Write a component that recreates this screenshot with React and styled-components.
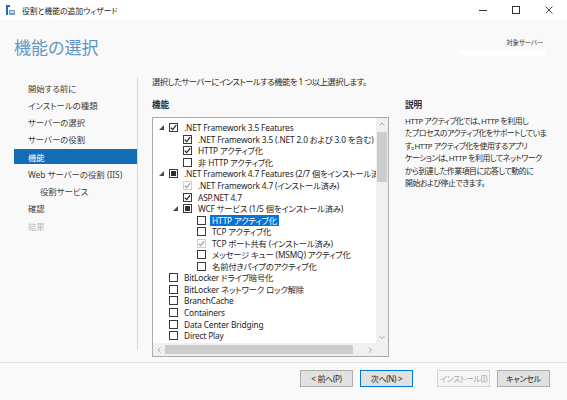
import React from 'react';
import styled, { createGlobalStyle } from 'styled-components';

const GlobalStyle = createGlobalStyle`
  html, body {
    margin: 0;
    padding: 0;
    background: #f9f9f9;
  }
  body {
    font-family: "Noto Sans", "Noto Sans CJK JP", sans-serif;
    font-feature-settings: "palt";
    color: #1e1e1e;
  }
`;

const Window = styled.div`
  width: 567px;
  height: 400px;
  display: flex;
  flex-direction: column;
  background: #f9f9f9;
  overflow: hidden;
`;

const TitleBar = styled.div`
  height: 20px;
  flex: none;
  background: #fff;
  display: flex;
  align-items: center;
  padding-left: 6px;
`;

const TitleText = styled.span`
  font-size: 7.8px;
  margin-left: 7px;
  color: #222;
`;

const Controls = styled.div`
  margin-left: auto;
  margin-right: 2px;
  display: flex;
`;

const ControlButton = styled.div`
  width: 33px;
  height: 20px;
  display: flex;
  align-items: center;
  justify-content: center;
`;

const Header = styled.div`
  height: 50px;
  flex: none;
  display: flex;
  justify-content: space-between;
  padding: 0 22px 0 14px;
`;

const PageTitle = styled.h1`
  margin: 17px 0 0;
  font-size: 17px;
  line-height: 22px;
  font-weight: 400;
  color: #5f95c4;
`;

const Target = styled.div`
  margin-top: 18px;
  display: flex;
  flex-direction: column;
  align-items: flex-end;
`;

const TargetLabel = styled.span`
  font-size: 6.5px;
  line-height: 10px;
  letter-spacing: -0.2px;
  margin-right: 2px;
  color: #333;
`;

const TargetValue = styled.span`
  width: 85px;
  height: 5px;
  margin-top: 2px;
  background: #fff;
`;

const Body = styled.div`
  flex: 1;
  display: flex;
  min-height: 0;
`;

const Nav = styled.nav`
  width: 138px;
  flex: none;
  box-sizing: border-box;
  margin: 7px 0 12px;
  padding-top: 3px;
  border-right: 1px solid #d9d9d9;
  display: flex;
  flex-direction: column;
  gap: 2.25px;
`;

const NavItem = styled.div`
  height: 15px;
  margin-left: 14px;
  padding-left: ${p => (p.$indent ? 26 : 14)}px;
  display: flex;
  align-items: center;
  font-size: 8.4px;
  color: ${p => (p.$active ? '#fff' : p.$disabled ? '#b9b9b9' : '#3c3c3c')};
  background: ${p => (p.$active ? '#136cb6' : 'transparent')};
  white-space: nowrap;
`;

const Content = styled.div`
  flex: 1;
  padding: 6px 0 0 14px;
  display: flex;
  flex-direction: column;
`;

const Intro = styled.div`
  font-size: 8.3px;
  line-height: 12px;
  letter-spacing: -0.5px;
  color: #2a2a2a;
  white-space: nowrap;
`;

const Columns = styled.div`
  margin-top: 11px;
  display: flex;
  gap: 16px;
`;

const Column = styled.div`
  width: ${p => p.$width}px;
  display: flex;
  flex-direction: column;
`;

const Heading = styled.div`
  font-size: 8.6px;
  line-height: 12px;
  font-weight: 700;
  color: #2a2a2a;
`;

const TreeBox = styled.div`
  margin-top: 6px;
  width: 237px;
  height: 240px;
  box-sizing: border-box;
  border: 1px solid #a9acb2;
  background: #fff;
  display: grid;
  grid-template-columns: 1fr 12px;
  grid-template-rows: 1fr 13px;
`;

const TreeList = styled.div`
  padding-top: 4px;
  overflow: hidden;
`;

const Row = styled.div`
  height: 11.56px;
  padding-left: ${p => 4 + p.$level * 14}px;
  display: flex;
  align-items: center;
  white-space: nowrap;
  font-size: 8.3px;
  letter-spacing: -0.15px;
  color: #1e1e1e;
`;

const ExpanderSlot = styled.span`
  width: 12px;
  flex: none;
  display: flex;
  align-items: center;
  padding-left: 2px;
  box-sizing: border-box;
`;

const Box = styled.span`
  width: 9px;
  height: 9px;
  flex: none;
  box-sizing: border-box;
  border: 1px solid ${p => (p.$muted ? '#cfcfcf' : '#3a3a3a')};
  background: #fff;
  display: flex;
  align-items: center;
  justify-content: center;
  margin-right: 6px;
`;

const PartialMark = styled.span`
  width: 5px;
  height: 5px;
  background: #2e2e2e;
`;

const Label = styled.span`
  padding: 0 2px;
  margin-left: -2px;
  line-height: 11px;
  background: ${p => (p.$selected ? '#0a74d6' : 'transparent')};
  color: ${p => (p.$selected ? '#fff' : 'inherit')};
`;

const VScroll = styled.div`
  background: #f0f0f0;
  display: flex;
  flex-direction: column;
  align-items: center;
`;

const HScroll = styled.div`
  background: #f0f0f0;
  display: flex;
  align-items: center;
`;

const Corner = styled.div`
  background: #f0f0f0;
`;

const ArrowCell = styled.div`
  flex: none;
  width: 12px;
  height: 12px;
  display: flex;
  align-items: center;
  justify-content: center;
`;

const VThumb = styled.div`
  width: 10px;
  height: 50px;
  margin-top: 2px;
  background: #cdcdcd;
`;

const HThumb = styled.div`
  width: 188px;
  height: 9px;
  background: #cdcdcd;
`;

const Track = styled.div`
  flex: 1;
`;

const Description = styled.div`
  margin-top: 4px;
  font-size: 7.9px;
  line-height: 12.4px;
  letter-spacing: -0.45px;
  color: #2a2a2a;
`;

const Line = styled.span`
  display: block;
  white-space: nowrap;
`;

const Footer = styled.div`
  height: 30px;
  flex: none;
  border-top: 1px solid #e0e0e0;
  display: flex;
  justify-content: flex-end;
  align-items: flex-start;
  padding: 7px 17px 0 0;
  gap: 7px;
`;

const Button = styled.button`
  width: 53px;
  height: 17px;
  padding: 0;
  margin-right: ${p => p.$spaceAfter || 0}px;
  font-family: inherit;
  font-feature-settings: "palt";
  font-size: 8px;
  letter-spacing: -0.3px;
  white-space: nowrap;
  color: ${p => (p.disabled ? '#a6a6a6' : '#1e1e1e')};
  background: ${p => (p.disabled ? '#f5f5f5' : '#e1e1e1')};
  border: 1px solid ${p => (p.disabled ? '#d2d2d2' : p.$primary ? '#0078d7' : '#adadad')};
  box-shadow: ${p => (p.$primary ? 'inset 0 0 0 1px #e1e1e1' : 'none')};
`;

const features = [
  { level: 0, expand: true, state: 'checked', label: '.NET Framework 3.5 Features' },
  { level: 1, state: 'checked', label: '.NET Framework 3.5 (.NET 2.0 および 3.0 を含む)' },
  { level: 1, state: 'checked', label: 'HTTP アクティブ化' },
  { level: 1, state: 'empty', label: '非 HTTP アクティブ化' },
  { level: 0, expand: true, state: 'partial', label: '.NET Framework 4.7 Features (2/7 個をインストール済み)' },
  { level: 1, state: 'installed', label: '.NET Framework 4.7 (インストール済み)' },
  { level: 1, state: 'checked', label: 'ASP.NET 4.7' },
  { level: 1, expand: true, state: 'partial', label: 'WCF サービス (1/5 個をインストール済み)' },
  { level: 2, state: 'empty', label: 'HTTP アクティブ化', selected: true },
  { level: 2, state: 'empty', label: 'TCP アクティブ化' },
  { level: 2, state: 'installed', label: 'TCP ポート共有 (インストール済み)' },
  { level: 2, state: 'empty', label: 'メッセージ キュー (MSMQ) アクティブ化' },
  { level: 2, state: 'empty', label: '名前付きパイプのアクティブ化' },
  { level: 0, state: 'empty', label: 'BitLocker ドライブ暗号化' },
  { level: 0, state: 'empty', label: 'BitLocker ネットワーク ロック解除' },
  { level: 0, state: 'empty', label: 'BranchCache' },
  { level: 0, state: 'empty', label: 'Containers' },
  { level: 0, state: 'empty', label: 'Data Center Bridging' },
  { level: 0, state: 'empty', label: 'Direct Play' },
];

const navItems = [
  { label: '開始する前に' },
  { label: 'インストールの種類' },
  { label: 'サーバーの選択' },
  { label: 'サーバーの役割' },
  { label: '機能', active: true },
  { label: 'Web サーバーの役割 (IIS)' },
  { label: '役割サービス', indent: true },
  { label: '確認' },
  { label: '結果', disabled: true },
];

const descriptionLines = [
  'HTTP アクティブ化では、HTTP を利用し',
  'たプロセスのアクティブ化をサポートしていま',
  'す。HTTP アクティブ化を使用するアプリ',
  'ケーションは、HTTP を利用してネットワーク',
  'から到達した作業項目に応答して動的に',
  '開始および停止できます。',
];

const AppIcon = () => (
  <svg width="9" height="10" viewBox="0 0 9 10">
    <rect x="0" y="0" width="2" height="10" fill="#1d6cc4" />
    <rect x="0" y="0" width="4" height="2" fill="#1d6cc4" />
    <rect x="3" y="5" width="6" height="5" fill="#7f9bb8" />
    <rect x="4" y="6" width="4" height="2" fill="#c9d8e8" />
  </svg>
);

const Expander = () => (
  <svg width="5" height="5" viewBox="0 0 5 5">
    <polygon points="5,0 5,5 0,5" fill="#4a4a4a" />
  </svg>
);

const Check = ({ color }) => (
  <svg width="7" height="7" viewBox="0 0 7 7">
    <polyline points="0.8,3.6 2.7,5.6 6.2,1.2" fill="none" stroke={color} strokeWidth="1.2" />
  </svg>
);

const Chevron = ({ dir }) => {
  const pts = {
    up: '0.5,3.5 3,1 5.5,3.5',
    down: '0.5,1 3,3.5 5.5,1',
    left: '3.5,0.5 1,3 3.5,5.5',
    right: '1,0.5 3.5,3 1,5.5',
  }[dir];
  const vertical = dir === 'up' || dir === 'down';
  return (
    <svg width={vertical ? 6 : 5} height={vertical ? 5 : 6} viewBox={vertical ? '0 0 6 5' : '0 0 5 6'}>
      <polyline points={pts} fill="none" stroke="#a3a3a3" strokeWidth="0.9" />
    </svg>
  );
};

const CheckBox = ({ state }) => {
  if (state === 'checked') return <Box><Check color="#222" /></Box>;
  if (state === 'installed') return <Box $muted><Check color="#9a9a9a" /></Box>;
  if (state === 'partial') return <Box><PartialMark /></Box>;
  return <Box />;
};

const App = () => (
  <Window>
    <GlobalStyle />
    <TitleBar>
      <AppIcon />
      <TitleText>役割と機能の追加ウィザード</TitleText>
      <Controls>
        <ControlButton>
          <svg width="8" height="1"><rect width="8" height="1" fill="#333" /></svg>
        </ControlButton>
        <ControlButton>
          <svg width="8" height="8"><rect x="0.5" y="0.5" width="7" height="7" fill="none" stroke="#333" /></svg>
        </ControlButton>
        <ControlButton>
          <svg width="8" height="8">
            <path d="M0.5 0.5 L7.5 7.5 M7.5 0.5 L0.5 7.5" stroke="#333" strokeWidth="0.9" />
          </svg>
        </ControlButton>
      </Controls>
    </TitleBar>

    <Header>
      <PageTitle>機能の選択</PageTitle>
      <Target>
        <TargetLabel>対象サーバー</TargetLabel>
        <TargetValue />
      </Target>
    </Header>

    <Body>
      <Nav>
        {navItems.map(item => (
          <NavItem key={item.label} $active={item.active} $indent={item.indent} $disabled={item.disabled}>
            {item.label}
          </NavItem>
        ))}
      </Nav>

      <Content>
        <Intro>選択したサーバーにインストールする機能を 1 つ以上選択します。</Intro>
        <Columns>
          <Column $width={237}>
            <Heading>機能</Heading>
            <TreeBox>
              <TreeList>
                {features.map((f, i) => (
                  <Row key={i} $level={f.level}>
                    <ExpanderSlot>{f.expand && <Expander />}</ExpanderSlot>
                    <CheckBox state={f.state} />
                    <Label $selected={f.selected}>{f.label}</Label>
                  </Row>
                ))}
              </TreeList>
              <VScroll>
                <ArrowCell><Chevron dir="up" /></ArrowCell>
                <VThumb />
                <Track />
                <ArrowCell><Chevron dir="down" /></ArrowCell>
              </VScroll>
              <HScroll>
                <ArrowCell><Chevron dir="left" /></ArrowCell>
                <HThumb />
                <Track />
                <ArrowCell><Chevron dir="right" /></ArrowCell>
              </HScroll>
              <Corner />
            </TreeBox>
          </Column>
          <Column $width={146}>
            <Heading>説明</Heading>
            <Description>
              {descriptionLines.map(line => (
                <Line key={line}>{line}</Line>
              ))}
            </Description>
          </Column>
        </Columns>
      </Content>
    </Body>

    <Footer>
      <Button>&lt; 前へ(P)</Button>
      <Button $primary $spaceAfter={17}>次へ(N) &gt;</Button>
      <Button disabled>インストール(I)</Button>
      <Button>キャンセル</Button>
    </Footer>
  </Window>
);

export default App;
